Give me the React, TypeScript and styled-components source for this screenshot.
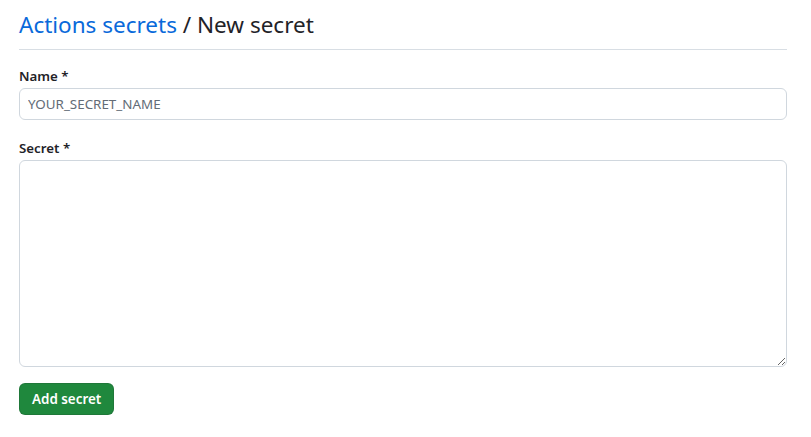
import styled, { createGlobalStyle } from "styled-components";

const GlobalStyle = createGlobalStyle`
  body {
    margin: 0;
    background: #ffffff;
    font-family: "Noto Sans", "Open Sans", sans-serif;
    color: #1f2328;
  }
`;

const App = () => {
  return (
    <>
      <GlobalStyle />
      <Page>
        <Header>
          <Title>
            <Crumb href="#">Actions secrets</Crumb> / New secret
          </Title>
        </Header>
        <Form>
          <Field $gap={18}>
            <Label>Name *</Label>
            <Input placeholder="YOUR_SECRET_NAME" />
          </Field>
          <Field $gap={16}>
            <Label>Secret *</Label>
            <TextArea />
          </Field>
          <Actions>
            <Button type="button">Add secret</Button>
          </Actions>
        </Form>
      </Page>
    </>
  );
};

export default App;

const Page = styled.div`
  padding: 8px 24px 0 19px;
`;

const Header = styled.div`
  border-bottom: 1px solid #d8dee4;
  padding-bottom: 8px;
  margin-bottom: 16px;
`;

const Title = styled.h2`
  margin: 0;
  font-size: 22.5px;
  font-weight: 400;
  line-height: 33px;
  color: #1f2328;
`;

const Crumb = styled.a`
  color: #0969da;
  text-decoration: none;
`;

const Form = styled.form`
  display: flex;
  flex-direction: column;
`;

const Field = styled.div<{ $gap: number }>`
  display: flex;
  flex-direction: column;
  margin-bottom: ${(p) => p.$gap}px;
`;

const Label = styled.label`
  font-size: 13.3px;
  font-weight: 600;
  line-height: 20px;
  margin-bottom: 2px;
`;

const Input = styled.input`
  box-sizing: border-box;
  height: 32px;
  width: 100%;
  padding: 0 8px;
  font-family: inherit;
  font-size: 13.4px;
  color: #1f2328;
  border: 1px solid #d0d7de;
  border-radius: 6px;
  outline: none;

  &::placeholder {
    color: #636c76;
  }
`;

const TextArea = styled.textarea`
  box-sizing: border-box;
  height: 207px;
  width: 100%;
  padding: 8px;
  font-family: inherit;
  font-size: 13.4px;
  border: 1px solid #d0d7de;
  border-radius: 6px;
  outline: none;
  resize: vertical;
`;

const Actions = styled.div`
  display: flex;
`;

const Button = styled.button`
  height: 32px;
  padding: 0 12px;
  font-family: inherit;
  font-size: 13.4px;
  font-weight: 600;
  color: #ffffff;
  background: #1f883d;
  border: 1px solid rgba(31, 35, 40, 0.15);
  border-radius: 6px;
  cursor: pointer;
`;
